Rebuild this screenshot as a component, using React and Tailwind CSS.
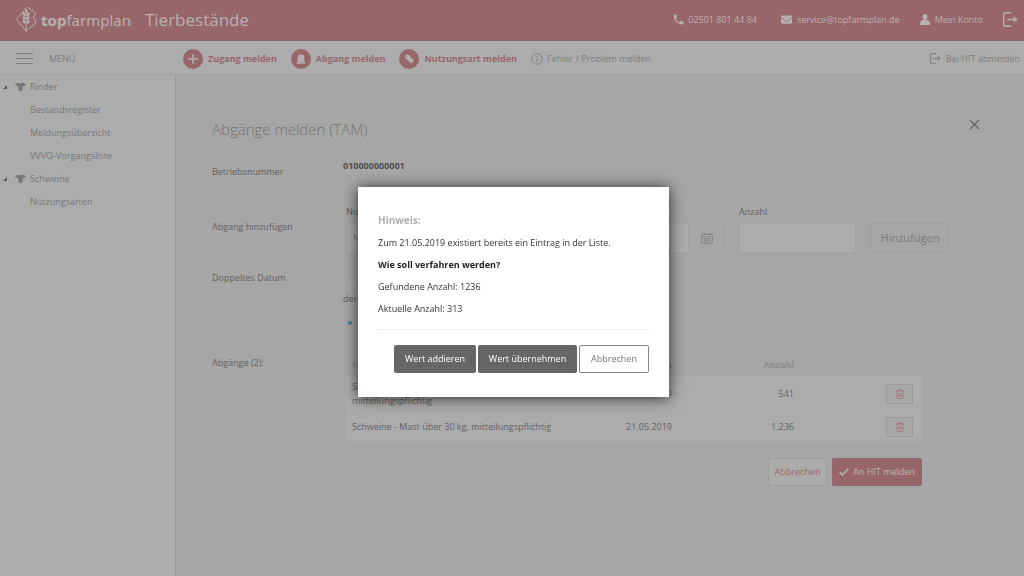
import React, { useState } from 'react';
import { MdPhone } from 'react-icons/md';
import { FaEnvelope } from 'react-icons/fa';

const entries = [
    { id: 1, type: ['Schweine - Ferkel bis 30 kg,', 'mitteilungspflichtig'], date: '03.05.2019', amount: '541' },
    { id: 2, type: ['Schweine - Mast über 30 kg, mitteilungspflichtig'], date: '21.05.2019', amount: '1.236' },
];

const menu = [
    { title: 'Rinder', items: ['Bestandsregister', 'Meldungsübersicht', 'VVVO-Vorgangsliste'] },
    { title: 'Schweine', items: ['Nutzungsarten'] },
];

function Logo() {
    return (
        <svg viewBox="0 0 20 25" className="w-5 h-[25px]" fill="none" stroke="currentColor" strokeWidth="1" strokeLinejoin="round" strokeLinecap="round">
            <path d="M7.500 4.500 1 11.200c-.5.6-.5 1.200 0 1.700l9.200 11.300V20" />
            <path d="M10.200 24.200c2-2.700 5.300-4 8.200-6.700.6-.6.900-1.200.9-2v-3L17 10l2.300-2.500c0-1-.4-2-1.200-2.600L12.600.9c-1.400-.7-3 .1-4.700 1.900" />
            <path d="M10.200 20V4" />
            <g fill="currentColor" stroke="none">
                <ellipse cx="10.200" cy="4.200" rx="1.300" ry="2" />
                <ellipse cx="8.100" cy="7.300" rx="1.200" ry="2" transform="rotate(-35 8.100 7.300)" />
                <ellipse cx="12.300" cy="7.300" rx="1.200" ry="2" transform="rotate(35 12.300 7.300)" />
                <ellipse cx="8.100" cy="11" rx="1.200" ry="2" transform="rotate(-35 8.100 11)" />
                <ellipse cx="12.300" cy="11" rx="1.200" ry="2" transform="rotate(35 12.300 11)" />
                <ellipse cx="8.100" cy="14.700" rx="1.200" ry="2" transform="rotate(-35 8.100 14.700)" />
                <ellipse cx="12.300" cy="14.700" rx="1.200" ry="2" transform="rotate(35 12.300 14.700)" />
            </g>
        </svg>
    );
}

function ExitIcon({ className }) {
    return (
        <svg viewBox="0 0 16 16" className={className} fill="none" stroke="currentColor" strokeWidth="1.500" strokeLinecap="round" strokeLinejoin="round">
            <path d="M8 .8H3A2.200 2.200 0 0 0 .8 3v10A2.200 2.200 0 0 0 3 15.200h5" />
            <path d="M5 8h9.500" />
            <path d="m11.800 5 3 3-3 3z" fill="currentColor" strokeWidth=".6" />
        </svg>
    );
}

function UserIcon() {
    return (
        <svg viewBox="0 0 10 11" className="w-[10px] h-[11px]" fill="currentColor">
            <ellipse cx="5" cy="3" rx="2.400" ry="3" />
            <path d="M0 9.200C0 7.300 1.300 6.400 3.300 6h3.400C8.700 6.400 10 7.300 10 9.200V10a1 1 0 0 1-1 1H1a1 1 0 0 1-1-1z" />
        </svg>
    );
}

function CowIcon() {
    return (
        <svg viewBox="0 0 11 9" className="w-[11px] h-[9px]" fill="currentColor">
            <path d="M2 .3C2.300 1 3 1.200 5.500 1.200S8.700 1 9 .3c.4.500.3 1.100 0 1.500L11 2.200c-.3 1.300-1.400 1.800-2.700 1.700L7.400 6l.2 1.400C7.500 8.500 6.800 9 5.500 9S3.500 8.500 3.400 7.400L3.600 6l-.9-2.100C1.400 4 .3 3.500 0 2.200l2-.4C1.700 1.400 1.600.8 2 .3z" />
        </svg>
    );
}

function PlusIcon() {
    return (
        <svg viewBox="0 0 20 20" className="size-5" stroke="currentColor" strokeWidth="1.400" strokeLinecap="round">
            <path d="M10 5.500v9M5.500 10h9" />
        </svg>
    );
}

function BellIcon() {
    return (
        <svg viewBox="0 0 20 20" className="size-5" fill="currentColor">
            <path d="M6.600 13V8.800c0-2.200 1.300-3.500 3.400-3.500s3.400 1.300 3.400 3.500V13zM5.500 13.300h9v1.500h-9z" />
        </svg>
    );
}

function TagIcon() {
    return (
        <svg viewBox="0 0 20 20" className="size-5">
            <path d="M6 6.300 9.300 5.500 14.600 11.200c.3.400.3.700 0 1L12.700 14c-.4.300-.8.300-1.100 0L6.300 9z" fill="currentColor" />
            <circle cx="7.700" cy="7.300" r=".6" fill="#97666a" />
        </svg>
    );
}

function InfoIcon() {
    return (
        <svg viewBox="0 0 12 12" className="size-3" fill="none" stroke="currentColor">
            <circle cx="6" cy="6" r="5.300" strokeWidth=".9" />
            <path d="M6 5.200v3.600M6 3.200v1" />
        </svg>
    );
}

function CalendarIcon() {
    return (
        <svg viewBox="0 0 12 11" className="w-3 h-[11px]" fill="none" stroke="currentColor" strokeWidth=".8">
            <rect x=".6" y="1.400" width="10.800" height="9" rx="1.200" />
            <path d="M.6 3.800h10.800M3.200 0v2.300M8.800 0v2.300" />
            <path d="M2.300 6h7.400M2.300 8.200h7.400M4 4.800v4.600M6 4.800v4.600M8 4.800v4.600" strokeWidth=".5" />
        </svg>
    );
}

function TrashIcon() {
    return (
        <svg viewBox="0 0 8 10" className="w-2 h-[10px]" fill="none" stroke="currentColor" strokeWidth=".9">
            <path d="M0 2h8M2.500 2V.6h3V2M1 2v6.600c0 .6.300.900.9.900h4.200c.6 0 .9-.3.900-.9V2M3 4v3.800M4 4v3.800M5 4v3.800" />
        </svg>
    );
}

function CheckIcon() {
    return (
        <svg viewBox="0 0 10 8" className="w-[10px] h-2" fill="none" stroke="currentColor" strokeWidth="1.600">
            <path d="m.7 4.200 2.800 2.700L9.300.8" />
        </svg>
    );
}

function ActionLink({ icon, children }) {
    return (
        <a href="#" className="flex items-center gap-[5px] font-bold text-[#97666a] whitespace-nowrap">
            <span className="size-5 rounded-full bg-[#97666a] text-[#b4b0b0]">{icon}</span>
            {children}
        </a>
    );
}

export default function App() {
    const [open, setOpen] = useState(true);
    const close = () => setOpen(false);

    return (
        <div className="min-h-screen flex flex-col bg-[#a6a6a6] text-[9px] leading-[14px] text-[#626262] font-['Open_Sans',sans-serif]">
            {/* Header */}
            <header className="h-[41px] shrink-0 flex items-center bg-[#97666a] text-[#b7b1b1] pl-4 pr-1.5 pb-0.5">
                <a href="#" className="flex items-center gap-[5px]">
                    <Logo />
                    <span className="text-[15px] leading-5 font-['Noto_Sans',sans-serif]"><b>top</b>farmplan</span>
                </a>
                <h1 className="ml-3.5 text-[17px] leading-6">Tierbestände</h1>
                <div className="ml-auto flex items-center whitespace-nowrap">
                    <a href="tel:025018014484" className="flex items-center gap-[3px]"><MdPhone size={13} />02501 801 44 84</a>
                    <a href="mailto:service@topfarmplan.de" className="ml-6 flex items-center gap-[5px]"><FaEnvelope size={11} />service@topfarmplan.de</a>
                    <a href="#" className="ml-5 flex items-center gap-[5px]"><UserIcon />Mein Konto</a>
                    <button type="button" aria-label="Abmelden" className="ml-5"><ExitIcon className="size-[15px]" /></button>
                </div>
            </header>

            {/* Toolbar */}
            <div className="h-[34px] shrink-0 flex items-center bg-[#acacac] border-b border-[#a2a2a2] text-[#7e7e7e] pt-0.5 pr-1">
                <button type="button" className="w-[183px] pl-4 flex items-center gap-4">
                    <svg viewBox="0 0 17 12" className="w-[17px] h-3" stroke="currentColor" strokeWidth="1"><path d="M0 .5h17M0 5.500h17M0 10.500h17" /></svg>
                    MENÜ
                </button>
                <nav className="flex items-center gap-3.5">
                    <ActionLink icon={<PlusIcon />}>Zugang melden</ActionLink>
                    <ActionLink icon={<BellIcon />}>Abgang melden</ActionLink>
                    <ActionLink icon={<TagIcon />}>Nutzungsart melden</ActionLink>
                    <a href="#" className="flex items-center gap-1 whitespace-nowrap"><InfoIcon />Fehler / Problem melden</a>
                </nav>
                <a href="#" className="ml-auto flex items-center gap-[5px] whitespace-nowrap"><ExitIcon className="size-[11px]" />Bei HIT abmelden</a>
            </div>

            <div className="flex-1 flex">
                {/* Sidebar */}
                <aside className="w-44 shrink-0 bg-[#acacac] border-r border-[#9b9b9b] text-[#777777] leading-[23px]">
                    {menu.map((group) => (
                        <div key={group.title}>
                            <a href="#" className="flex items-center pl-[3px]">
                                <svg viewBox="0 0 4 4" className="size-1 text-[#555555]" fill="currentColor"><path d="M4 0v4H0z" /></svg>
                                <span className="ml-2 mr-1"><CowIcon /></span>
                                {group.title}
                            </a>
                            {group.items.map((item) => (
                                <a key={item} href="#" className="block pl-[30px]">{item}</a>
                            ))}
                        </div>
                    ))}
                </aside>

                {/* Content */}
                <main className="flex-1 min-w-0 pl-9 pr-11 pt-11">
                    <div className="flex justify-between">
                        <h2 className="text-[15px] leading-5 font-light text-[#727272]">Abgänge melden (TAM)</h2>
                        <button type="button" aria-label="Schließen" className="self-start">
                            <svg viewBox="0 0 11 11" className="size-[11px]" stroke="currentColor" strokeWidth="1.200"><path d="m1 1 9 9M10 1l-9 9" /></svg>
                        </button>
                    </div>

                    <div className="mt-5 grid grid-cols-[131px_1fr]">
                        <div className="pt-1.5">Betriebsnummer</div>
                        <div className="font-bold text-[#4e4e4e]">010000000001</div>
                    </div>

                    <div className="mt-[26px] grid grid-cols-[134px_1fr]">
                        <div className="pt-[15px]">Abgang hinzufügen</div>
                        <div className="flex items-end">
                            <div className="w-[190px]">
                                <label htmlFor="type" className="block mb-1">Nutzungsart</label>
                                <select id="type" className="w-full h-[30px] px-1.5 appearance-none border border-[#a1a1a1] bg-[#acacac] text-[#7e7e7e]">
                                    <option>Nutzungsart</option>
                                </select>
                            </div>
                            <div className="ml-3.5 w-[175px]">
                                <label htmlFor="date" className="block mb-1">Datum</label>
                                <div className="flex">
                                    <input id="date" type="text" className="min-w-0 flex-1 h-[30px] px-2 border border-[#a1a1a1] bg-[#acacac]" />
                                    <button type="button" aria-label="Kalender" className="w-9 h-[30px] flex items-center justify-center border border-l-0 border-[#a0a0a0] text-[#7a7a7a]"><CalendarIcon /></button>
                                </div>
                            </div>
                            <div className="ml-3.5 w-[117px]">
                                <label htmlFor="amount" className="block mb-1">Anzahl</label>
                                <input id="amount" type="text" className="w-full h-[30px] px-2 border border-[#a1a1a1] bg-[#acacac]" />
                            </div>
                            <button type="button" className="ml-3.5 w-20 h-[30px] border border-[#9f9f9f] text-[11px] text-[#7a7a7a]">Hinzufügen</button>
                        </div>
                    </div>

                    <div className="mt-[18px] grid grid-cols-[131px_1fr]">
                        <div>Doppeltes Datum</div>
                        <div className="pt-[7px] w-[300px]">
                            <label className="block">
                                <input type="radio" name="double" className="appearance-none size-1.5 ml-1 mr-1.5 rounded-full bg-[#adadad]" />
                                Die Anzahl soll zum Wert addiert werden,<br />der bereits existiert
                            </label>
                            <label className="block mt-[11px]">
                                <input type="radio" name="double" defaultChecked className="appearance-none size-1 ml-[5px] mr-1.5 mb-0.5 rounded-full bg-[#45838b]" />
                                Jedes Mal nachfragen
                            </label>
                        </div>
                    </div>

                    <div className="mt-[25px] grid grid-cols-[134px_576px]">
                        <div>Abgänge (2):</div>
                        <div>
                            <table className="w-full">
                                <thead className="text-[#8c8c8c] text-left">
                                    <tr>
                                        <th className="w-[250px] pl-1.5 pt-0.5 pb-1">Nutzungsart</th>
                                        <th className="w-[76px] pt-0.5 pb-1 text-right">Abgangsdatum</th>
                                        <th className="w-[122px] pt-0.5 pb-1 text-right">Anzahl</th>
                                        <th aria-label="Löschen"></th>
                                    </tr>
                                </thead>
                                <tbody className="bg-[#acacac]">
                                    {entries.map((entry) => (
                                        <tr key={entry.id} className="border-b border-[#a7a7a7]">
                                            <td className="py-1 pl-1.5">
                                                {entry.type.map((line) => <div key={line}>{line}</div>)}
                                            </td>
                                            <td className="text-right">{entry.date}</td>
                                            <td className="text-right">{entry.amount}</td>
                                            <td className="py-1 pr-[9px]">
                                                <button type="button" aria-label="Eintrag löschen" className="ml-auto w-[27px] h-5 flex items-center justify-center bg-[#a8a8a8] border border-[#9a9a9a] text-[#a0777b]"><TrashIcon /></button>
                                            </td>
                                        </tr>
                                    ))}
                                </tbody>
                            </table>
                            <div className="mt-4 flex justify-end gap-[5px]">
                                <button type="button" className="w-[59px] h-7 rounded-xs border border-[#a0a0a0] bg-[#acacac] text-[#9a666b]">Abbrechen</button>
                                <button type="button" className="w-[90px] h-7 flex items-center justify-center gap-1 rounded-xs bg-[#97666a] text-[#b9b3b3]"><CheckIcon />An HIT melden</button>
                            </div>
                        </div>
                    </div>
                </main>
            </div>

            {/* Dialog */}
            {open && (
                <div className="fixed inset-0 flex items-center justify-center pt-2 pl-[3px]">
                    <div role="dialog" aria-modal="true" aria-labelledby="dialog-title" className="w-[311px] bg-white px-5 pt-[26px] pb-6 text-[#333333] shadow-[0_1px_14px_rgba(0,0,0,0.75)]">
                        <h3 id="dialog-title" className="text-[10px] font-bold text-[#b0b0b0]">Hinweis:</h3>
                        <div className="mt-[9px] space-y-2">
                            <p>Zum 21.05.2019 existiert bereits ein Eintrag in der Liste.</p>
                            <p className="font-bold text-[#222222]">Wie soll verfahren werden?</p>
                            <p>Gefundene Anzahl: 1236</p>
                            <p>Aktuelle Anzahl: 313</p>
                        </div>
                        <div className="mt-[13px] pt-[15px] border-t border-[#eeeeee] flex justify-end gap-0.5">
                            <button type="button" onClick={close} className="w-[82px] h-7 rounded-xs bg-[#666666] font-medium text-white">Wert addieren</button>
                            <button type="button" onClick={close} className="w-[99px] h-7 rounded-xs bg-[#666666] font-medium text-white">Wert übernehmen</button>
                            <button type="button" onClick={close} className="w-[70px] h-7 rounded-xs border border-[#888888] text-[#777777]">Abbrechen</button>
                        </div>
                    </div>
                </div>
            )}
        </div>
    );
}
